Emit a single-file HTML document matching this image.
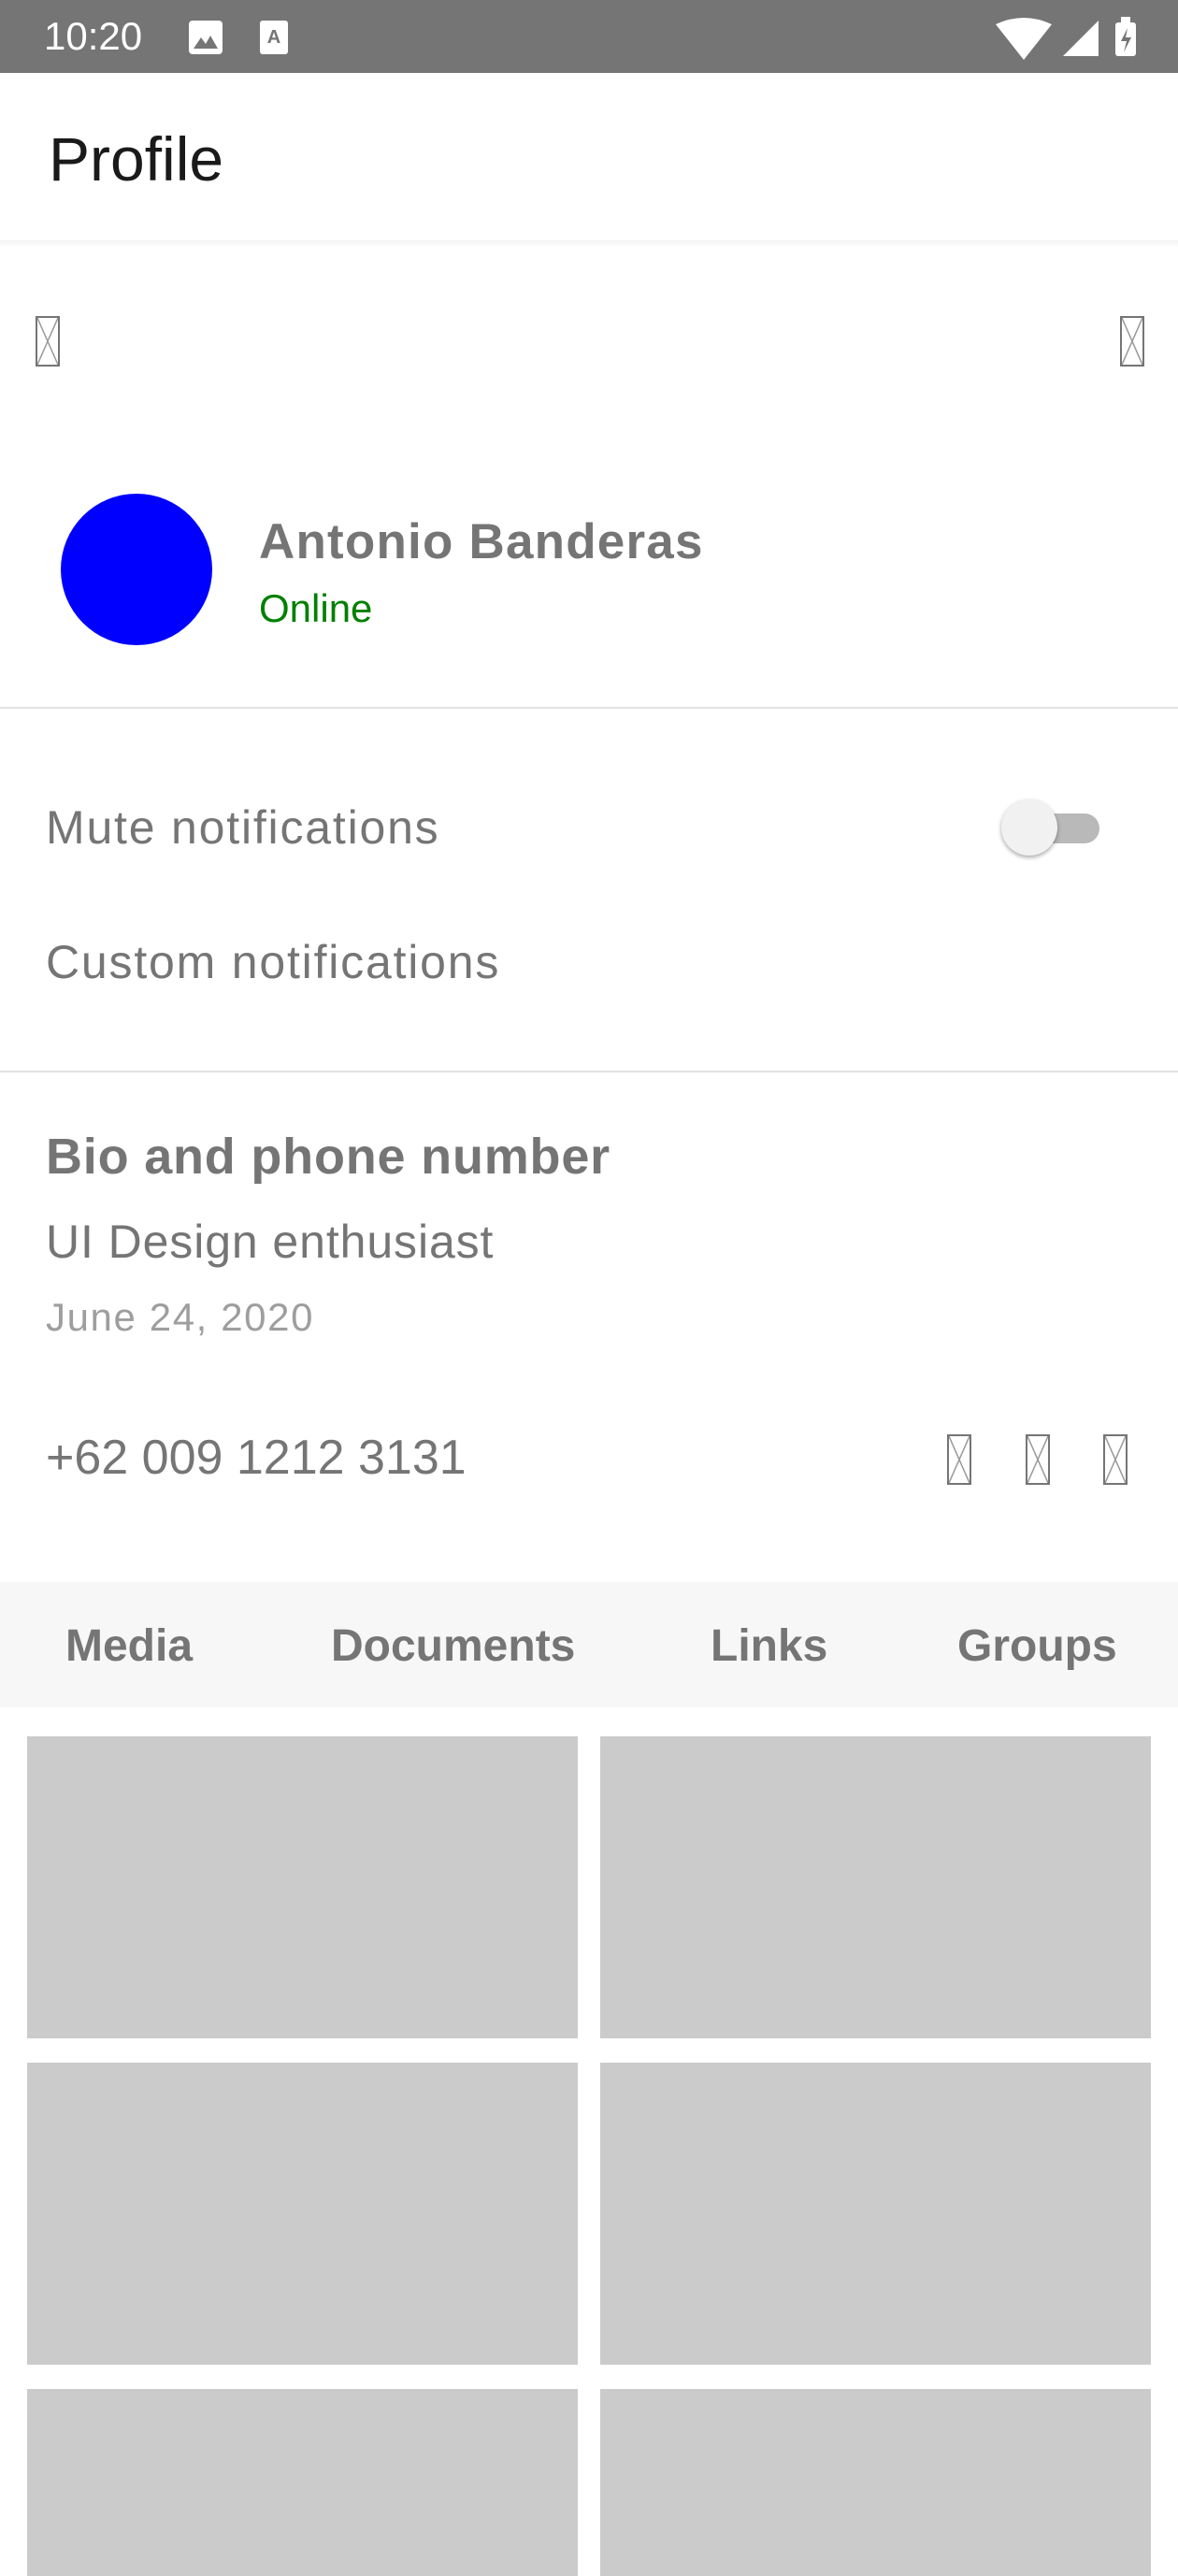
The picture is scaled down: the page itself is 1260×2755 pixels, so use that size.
<!DOCTYPE html>
<html><head><meta charset="utf-8"><style>
*{margin:0;padding:0;box-sizing:border-box}
body{width:1260px;height:2720px;overflow:hidden;background:#fff;font-family:"Liberation Sans",sans-serif;position:relative}
.a{position:absolute;white-space:nowrap}
.bi{position:absolute;width:26px;height:54px;border:2px solid #757575}
.bi svg{position:absolute;left:0;top:0}
.g{position:absolute;background:#cbcbcb}
.t{position:absolute;top:1736px;font-size:48px;color:#757575;font-weight:bold;line-height:50px}
.r{font-size:50px;letter-spacing:1.8px}
</style></head><body>
<div class="a" style="left:0;top:0;width:1260px;height:78px;background:#757575"></div>
<div class="a" style="left:47px;top:16px;font-size:42px;color:#fff;line-height:46px">10:20</div>
<svg class="a" style="left:202px;top:22px" width="36" height="36"><rect x="0" y="0" width="36" height="36" rx="4" fill="#fff"/><path d="M5 30 L13 18 L18 25 L23 16 L31 30Z" fill="#757575"/></svg>
<svg class="a" style="left:278px;top:22px" width="30" height="36"><rect x="0" y="0" width="30" height="36" rx="3" fill="#fff"/><text x="15" y="24" font-size="20" font-family="Liberation Sans" font-weight="bold" text-anchor="middle" fill="#757575">A</text></svg>
<svg class="a" style="left:1065px;top:18px" width="150" height="46"><path d="M0 8 Q30 -6 60 8 L30 46Z" fill="#fff"/><path d="M110 4 L110 42 L72 42Z" fill="#fff"/><rect x="128" y="6" width="22" height="36" rx="3" fill="#fff"/><rect x="134" y="0" width="10" height="8" fill="#fff"/><path d="M141 12 L134 26 L140 26 L137 38 L145 22 L139 22Z" fill="#757575"/></svg>
<div class="a" style="left:52px;top:133px;font-size:66px;color:#1a1a1a;line-height:74px">Profile</div>
<div class="a" style="left:0;top:257px;width:1260px;height:8px;background:linear-gradient(#f3f3f3,#fff)"></div>
<div class="bi" style="left:38px;top:338px"><svg width="22" height="50"><path d="M0 0 L22 50 M22 0 L0 50" stroke="#999" stroke-width="1.5"/></svg></div>
<div class="bi" style="left:1198px;top:338px"><svg width="22" height="50"><path d="M0 0 L22 50 M22 0 L0 50" stroke="#999" stroke-width="1.5"/></svg></div>
<div class="a" style="left:65px;top:528px;width:162px;height:162px;border-radius:50%;background:#0000ff"></div>
<div class="a" style="left:277px;top:550px;font-size:53px;font-weight:bold;color:#757575;line-height:60px;letter-spacing:1.2px">Antonio Banderas</div>
<div class="a" style="left:277px;top:627px;font-size:42px;color:#008000;line-height:48px">Online</div>
<div class="a" style="left:0;top:756px;width:1260px;height:2px;background:#e2e2e2"></div>
<div class="a r" style="left:49px;top:857px;color:#757575;line-height:56px">Mute notifications</div>
<div class="a" style="left:1078px;top:870px;width:98px;height:32px;border-radius:16px;background:#b9b9b9"></div>
<div class="a" style="left:1071px;top:855px;width:60px;height:60px;border-radius:50%;background:#f1f1f1;box-shadow:0 2px 5px rgba(0,0,0,.35)"></div>
<div class="a r" style="left:49px;top:1001px;color:#757575;line-height:56px">Custom notifications</div>
<div class="a" style="left:0;top:1145px;width:1260px;height:2px;background:#e2e2e2"></div>
<div class="a" style="left:49px;top:1207px;font-size:54px;font-weight:bold;color:#757575;line-height:60px;letter-spacing:0.8px">Bio and phone number</div>
<div class="a" style="left:49px;top:1300px;font-size:50px;letter-spacing:0.9px;color:#757575;line-height:56px">UI Design enthusiast</div>
<div class="a" style="left:49px;top:1386px;font-size:42px;letter-spacing:1.6px;color:#9e9e9e;line-height:46px">June 24, 2020</div>
<div class="a" style="left:49px;top:1530px;font-size:52px;color:#757575;line-height:58px">+62 009 1212 3131</div>
<div class="bi" style="left:1013px;top:1534px"><svg width="22" height="50"><path d="M0 0 L22 50 M22 0 L0 50" stroke="#999" stroke-width="1.5"/></svg></div>
<div class="bi" style="left:1097px;top:1534px"><svg width="22" height="50"><path d="M0 0 L22 50 M22 0 L0 50" stroke="#999" stroke-width="1.5"/></svg></div>
<div class="bi" style="left:1180px;top:1534px"><svg width="22" height="50"><path d="M0 0 L22 50 M22 0 L0 50" stroke="#999" stroke-width="1.5"/></svg></div>
<div class="a" style="left:0;top:1692px;width:1260px;height:134px;background:#f7f7f7"></div>
<div class="t" style="left:70px">Media</div>
<div class="t" style="left:354px">Documents</div>
<div class="t" style="left:760px">Links</div>
<div class="t" style="left:1024px">Groups</div>
<div class="g" style="left:29px;top:1857px;width:589px;height:323px"></div>
<div class="g" style="left:642px;top:1857px;width:589px;height:323px"></div>
<div class="g" style="left:29px;top:2206px;width:589px;height:323px"></div>
<div class="g" style="left:642px;top:2206px;width:589px;height:323px"></div>
<div class="g" style="left:29px;top:2555px;width:589px;height:200px"></div>
<div class="g" style="left:642px;top:2555px;width:589px;height:200px"></div>
</body></html>
